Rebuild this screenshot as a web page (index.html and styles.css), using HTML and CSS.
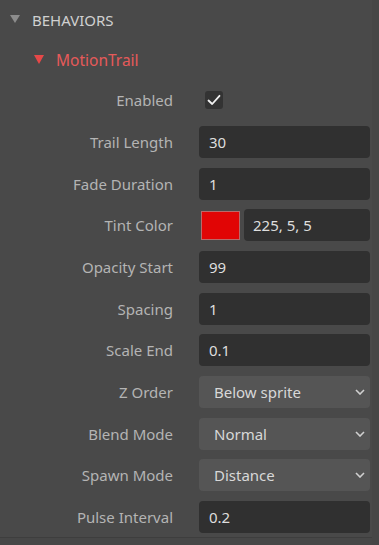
FILE: index.html
```html
<!DOCTYPE html>
<html>
<head>
<meta charset="utf-8">
<link rel="stylesheet" href="styles.css">
</head>
<body>
<div class="panel">
  <div class="content">
    <div class="section-header">
      <span class="tri tri-gray"></span>
      <span class="section-title">BEHAVIORS</span>
    </div>
    <div class="sub-header">
      <span class="tri tri-red"></span>
      <span class="sub-title">MotionTrail</span>
    </div>
    <div class="rows">
      <div class="label">Enabled</div>
      <div class="field"><span class="checkbox"><svg width="18" height="18" viewBox="0 0 18 18"><path d="M3.5 9.5 L7.2 13 L14.5 4.8" fill="none" stroke="#f2f2f2" stroke-width="1.8" stroke-linecap="round" stroke-linejoin="round"/></svg></span></div>

      <div class="label">Trail Length</div>
      <div class="field"><div class="input">30</div></div>

      <div class="label">Fade Duration</div>
      <div class="field"><div class="input">1</div></div>

      <div class="label">Tint Color</div>
      <div class="field color-field"><span class="swatch"></span><div class="input color-input">225, 5, 5</div></div>

      <div class="label">Opacity Start</div>
      <div class="field"><div class="input">99</div></div>

      <div class="label">Spacing</div>
      <div class="field"><div class="input">1</div></div>

      <div class="label">Scale End</div>
      <div class="field"><div class="input">0.1</div></div>

      <div class="label">Z Order</div>
      <div class="field"><div class="select"><span>Below sprite</span><svg class="chev" width="10" height="6" viewBox="0 0 10 6"><path d="M1 1 L5 5 L9 1" fill="none" stroke="#d0d0d0" stroke-width="1.6"/></svg></div></div>

      <div class="label">Blend Mode</div>
      <div class="field"><div class="select"><span>Normal</span><svg class="chev" width="10" height="6" viewBox="0 0 10 6"><path d="M1 1 L5 5 L9 1" fill="none" stroke="#d0d0d0" stroke-width="1.6"/></svg></div></div>

      <div class="label">Spawn Mode</div>
      <div class="field"><div class="select"><span>Distance</span><svg class="chev" width="10" height="6" viewBox="0 0 10 6"><path d="M1 1 L5 5 L9 1" fill="none" stroke="#d0d0d0" stroke-width="1.6"/></svg></div></div>

      <div class="label">Pulse Interval</div>
      <div class="field"><div class="input">0.2</div></div>
    </div>
  </div>
  <div class="footer"></div>
</div>
</body>
</html>
```
FILE: styles.css
```css
html, body {
  margin: 0;
  padding: 0;
  background: #494949;
}
.panel {
  width: 379px;
  height: 545px;
  background: #494949;
  font-family: "Noto Sans", "Open Sans", sans-serif;
  font-size: 15px;
  display: flex;
  flex-direction: column;
  overflow: hidden;
  box-sizing: border-box;
  border-right: 7px solid #464646;
}
.content {
  flex: 0 0 537px;
  box-sizing: border-box;
}
.footer {
  flex: 1;
  border-top: 1px solid #3e3e3e;
  background: #474747;
}
.section-header {
  height: 40px;
  display: flex;
  align-items: center;
  padding-left: 10px;
}
.tri {
  width: 0;
  height: 0;
}
.tri-gray {
  border-left: 5px solid transparent;
  border-right: 5px solid transparent;
  border-top: 8px solid #8c8c8c;
  margin-right: 12px;
  margin-top: -2px;
}
.section-title {
  color: #d0d0d0;
  font-size: 15px;
}
.sub-header {
  height: 40px;
  display: flex;
  align-items: center;
  padding-left: 34px;
}
.tri-red {
  border-left: 5.5px solid transparent;
  border-right: 5.5px solid transparent;
  border-top: 9px solid #e64848;
  margin-right: 12px;
  margin-top: -2px;
}
.sub-title {
  color: #e65a5a;
  font-size: 15.5px;
}
.rows {
  margin-top: 4.3px;
  display: grid;
  grid-template-columns: 173px 171px;
  column-gap: 26px;
  row-gap: 9.67px;
  grid-auto-rows: 32px;
}
.label {
  color: #b4b4b4;
  text-align: right;
  display: flex;
  align-items: center;
  justify-content: flex-end;
  white-space: nowrap;
}
.field {
  display: flex;
  align-items: center;
  min-width: 0;
}
.checkbox {
  width: 18px;
  height: 18px;
  margin-left: 6px;
  border-radius: 3px;
  background: #333333;
  display: flex;
}
.input {
  flex: 1;
  height: 32px;
  box-sizing: border-box;
  background: #303030;
  border-radius: 4px;
  color: #dedede;
  padding-left: 10px;
  display: flex;
  align-items: center;
}
.color-field {
  gap: 4px;
}
.swatch {
  width: 39px;
  height: 29px;
  box-sizing: border-box;
  margin-left: 2px;
  background: #e10505;
  border: 1px solid #b86a6a;
}
.color-input {
  padding-left: 9px;
}
.select {
  flex: 1;
  height: 32px;
  box-sizing: border-box;
  background: #555555;
  border-radius: 4px;
  color: #d8d8d8;
  padding: 0 5px 0 15px;
  display: flex;
  align-items: center;
  justify-content: space-between;
}
.chev {
  display: block;
}
```
